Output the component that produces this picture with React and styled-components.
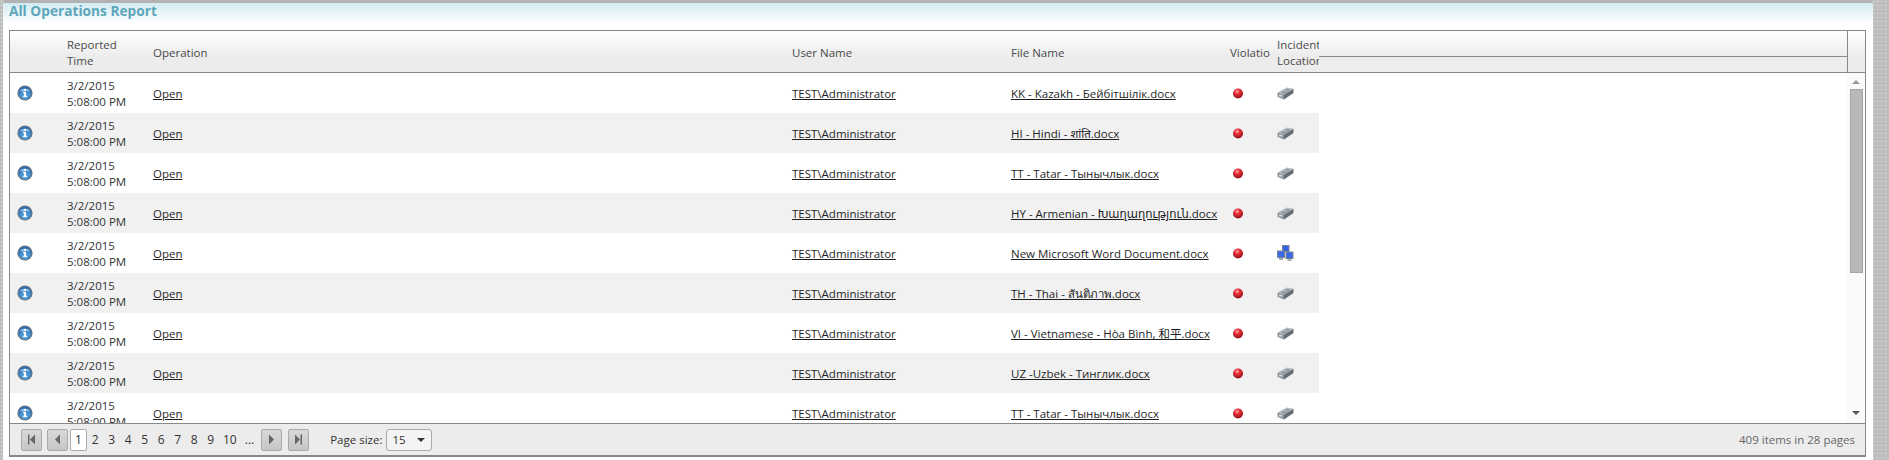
import React from 'react';
import styled, { createGlobalStyle } from 'styled-components';

const FONT = `"Open Sans", "Noto Sans", "DejaVu Sans", "Noto Sans CJK SC", sans-serif`;

const rows = [
  { file: 'KK - Kazakh - Бейбітшілік.docx' },
  { file: 'HI - Hindi - शांति.docx' },
  { file: 'TT - Tatar - Тынычлык.docx' },
  { file: 'HY - Armenian - Խաղաղություն.docx' },
  { file: 'New Microsoft Word Document.docx', network: true },
  { file: 'TH - Thai - สันติภาพ.docx' },
  { file: 'VI - Vietnamese - Hòa Bình, 和平.docx' },
  { file: 'UZ -Uzbek - Тинглик.docx' },
  { file: 'TT - Tatar - Тынычлык.docx' },
];

const InfoIcon = () => (
  <svg width="16" height="16" viewBox="0 0 16 16">
    <defs>
      <radialGradient id="infoFill" cx="50%" cy="75%" r="65%">
        <stop offset="0" stopColor="#62b0ea" />
        <stop offset="1" stopColor="#2a70b4" />
      </radialGradient>
    </defs>
    <circle cx="8" cy="8" r="7.6" fill="#6a737c" />
    <circle cx="8" cy="8" r="6.5" fill="url(#infoFill)" />
    <path d="M3 6.5C4 3.2 12 3.2 13 6.5C11 5.4 5 5.4 3 6.5Z" fill="#a9cbe6" />
    <rect x="6.9" y="3.8" width="2.2" height="1.9" fill="#fff" />
    <path d="M6 6.8h3.1v4.1H10V12H6v-1.1h.9V7.9H6Z" fill="#fff" />
  </svg>
);

const ViolationIcon = () => (
  <svg width="11" height="11" viewBox="0 0 11 11">
    <defs>
      <radialGradient id="redBall" cx="42%" cy="30%" r="72%">
        <stop offset="0" stopColor="#ffa8a8" />
        <stop offset="0.35" stopColor="#e8303a" />
        <stop offset="1" stopColor="#8e0f16" />
      </radialGradient>
    </defs>
    <circle cx="5" cy="5.5" r="5" fill="url(#redBall)" />
  </svg>
);

const DriveIcon = () => (
  <svg width="17" height="13" viewBox="0 0 17 13">
    <path d="M0.5 5.5L10 0.5L16.5 1.8L7 7.6Z" fill="#b3bcc1" />
    <path d="M7 7.6L16.5 1.8V6L7 12.5Z" fill="#666e73" />
    <path d="M0.5 5.5L7 7.6V12.5L0.5 10Z" fill="#8f979c" />
    <path d="M4 5.4L9.8 2.2L13 2.9L7.2 6.4Z" fill="#7c858b" />
    <path d="M6 4.9L9.8 2.9L11 3.2L7.3 5.3Z" fill="#cfd6da" />
    <rect x="2" y="8" width="3" height="1.4" fill="#dde1e3" />
  </svg>
);

const NetworkIcon = () => (
  <svg width="17" height="17" viewBox="0 0 17 17">
    <rect x="5.5" y="0.5" width="6.5" height="6" fill="#3560e4" stroke="#7d858b" />
    <rect x="0.5" y="6" width="7" height="6.5" fill="#3a68ec" stroke="#7d858b" />
    <rect x="9" y="7" width="7" height="6.5" fill="#3a68ec" stroke="#7d858b" />
    <rect x="2" y="13" width="4" height="2" fill="#a4aab0" />
    <rect x="10.5" y="14" width="4" height="2" fill="#a4aab0" />
  </svg>
);

const GlobalStyle = createGlobalStyle`
  html, body {
    margin: 0;
    height: 460px;
    overflow: hidden;
  }
`;

const Page = styled.div`
  height: 460px;
  box-sizing: border-box;
  padding-right: 16px;
  padding-left: 3px;
  background-color: #bebebe;
  background-image: radial-gradient(circle at 1.5px 1.5px, #e6e6e6 0.6px, transparent 0.8px);
  background-size: 4px 4px;
  font-family: ${FONT};
  font-size: 11.5px;
  color: #333;
`;

const Panel = styled.div`
  height: 100%;
  box-sizing: border-box;
  display: flex;
  flex-direction: column;
  background: #fff;
  border-top: 3px solid #b2b2b2;
  border-top-left-radius: 3px;
  border-top-right-radius: 3px;
  padding: 0 7px 3px 6px;
`;

const TitleBar = styled.div`
  height: 20px;
  flex: none;
  margin: 0 -7px 7px -6px;
  padding-left: 6px;
  background: linear-gradient(#d2ebf3, #ffffff);
`;

const Title = styled.h1`
  margin: 0;
  font-family: ${FONT};
  font-size: 13.7px;
  line-height: 15px;
  font-weight: 700;
  color: #5ea6ba;
`;

const Grid = styled.div`
  flex: 1;
  min-height: 0;
  display: flex;
  flex-direction: column;
  border: 1px solid #888;
  border-bottom-width: 2px;
`;

const Head = styled.div`
  flex: none;
  height: 41px;
  display: flex;
  border-bottom: 1px solid #888;
  background: linear-gradient(#ffffff, #ececec 62%);
`;

const columns = '48px 86px 639px 219px 219px 49px 49px';

const HeadCells = styled.div`
  flex: none;
  display: grid;
  grid-template-columns: ${columns};
  width: 1309px;
`;

const HeadCell = styled.div`
  display: flex;
  align-items: center;
  padding-top: 2px;
  padding-left: ${p => (p.$tight ? '7px' : '9px')};
  line-height: 16px;
  overflow: hidden;
  color: #4a4a4a;
  white-space: ${p => (p.$nowrap ? 'nowrap' : 'normal')};
`;

const HeadFiller = styled.div`
  flex: 1;
  display: flex;
  flex-direction: column;
`;

const FillerTop = styled.div`
  height: 25px;
  border-bottom: 1px solid #888;
`;

const FillerBottom = styled.div`
  flex: 1;
  background: #ededed;
`;

const HeadCorner = styled.div`
  flex: none;
  width: 17px;
  border-left: 1px solid #888;
`;

const Body = styled.div`
  flex: 1;
  min-height: 0;
  display: flex;
`;

const RowList = styled.div`
  flex: 1;
  min-width: 0;
  overflow: hidden;
`;

const Row = styled.div`
  display: grid;
  grid-template-columns: ${columns};
  width: 1309px;
  height: 40px;
  align-items: center;
  background: ${p => (p.$alt ? '#f1f1f1' : '#fff')};
`;

const IconCell = styled.div`
  display: flex;
  align-items: center;
  padding-left: ${p => p.$pad}px;
`;

const Time = styled.div`
  padding: 2px 0 0 9px;
  line-height: 16px;
  white-space: nowrap;
`;

const LinkCell = styled.a`
  justify-self: start;
  margin: 2px 0 0 9px;
  line-height: 16px;
  color: #1f1f1f;
  text-decoration: underline;
  white-space: nowrap;
`;

const Scrollbar = styled.div`
  flex: none;
  width: 18px;
  display: flex;
  flex-direction: column;
  align-items: center;
  background: #fafafa;
`;

const Arrow = styled.div`
  width: 0;
  height: 0;
  flex: none;
  margin: ${p => p.$margin};
  border-left: 4px solid transparent;
  border-right: 4px solid transparent;
  ${p => (p.$down ? 'border-top: 4px solid #555;' : 'border-bottom: 4px solid #999;')}
`;

const Thumb = styled.div`
  flex: none;
  width: 11px;
  height: 182px;
  background: #b9b9b9;
  border: 1px solid #a6a6a6;
`;

const ScrollSpace = styled.div`
  flex: 1;
`;

const Pager = styled.div`
  flex: none;
  height: 32px;
  box-sizing: border-box;
  display: flex;
  align-items: center;
  padding: 0 10px 0 11px;
  border-top: 1px solid #888;
  background: #ececec;
`;

const PageButton = styled.div`
  width: 21px;
  height: 22px;
  box-sizing: border-box;
  display: flex;
  align-items: center;
  justify-content: center;
  margin-right: ${p => p.$gap || 0}px;
  border: 1px solid #aaa;
  border-radius: 2px;
  background: linear-gradient(#d8d8d8, #c6c6c6);
`;

const Numbers = styled.div`
  display: flex;
  align-items: center;
  margin-right: 3px;
`;

const PageNumber = styled.div`
  min-width: 16.5px;
  box-sizing: border-box;
  padding: 0 4px;
  text-align: center;
  font-size: 12px;
`;

const CurrentPage = styled.div`
  width: 17px;
  height: 22px;
  box-sizing: border-box;
  line-height: 20px;
  text-align: center;
  font-size: 12px;
  background: #fff;
  border: 1px solid #aaa;
  border-radius: 2px;
`;

const PageSize = styled.div`
  display: flex;
  align-items: center;
  margin-left: 21px;
  gap: 4px;
`;

const Select = styled.div`
  width: 46px;
  height: 22px;
  box-sizing: border-box;
  display: flex;
  align-items: center;
  justify-content: space-between;
  padding: 0 6px 0 5px;
  border: 1px solid #aaa;
  border-radius: 3px;
  background: #f4f4f4;
`;

const SelectCaret = styled.div`
  width: 0;
  height: 0;
  border-left: 4px solid transparent;
  border-right: 4px solid transparent;
  border-top: 4px solid #333;
`;

const PagerInfo = styled.div`
  margin-left: auto;
  color: #666;
`;

const Skip = ({ dir }) => (
  <svg width="9" height="11" viewBox="0 0 9 11">
    {dir === 'first' ? (
      <path d="M1 0.5h1.5v10H1ZM8 0.5v10L3 5.5Z" fill="#666" />
    ) : (
      <path d="M8 0.5H6.5v10H8ZM1 0.5v10L6 5.5Z" fill="#666" />
    )}
  </svg>
);

const Step = ({ dir }) => (
  <svg width="7" height="11" viewBox="0 0 7 11">
    <path d={dir === 'prev' ? 'M6 0.5v10L1 5.5Z' : 'M1 0.5v10L6 5.5Z'} fill="#666" />
  </svg>
);

export default function App() {
  return (
    <>
      <GlobalStyle />
      <Page>
        <Panel>
          <TitleBar>
            <Title>All Operations Report</Title>
          </TitleBar>
          <Grid>
            <Head>
              <HeadCells>
                <HeadCell />
                <HeadCell>Reported Time</HeadCell>
                <HeadCell>Operation</HeadCell>
                <HeadCell>User Name</HeadCell>
                <HeadCell>File Name</HeadCell>
                <HeadCell $nowrap>Violation</HeadCell>
                <HeadCell $tight>Incident Location</HeadCell>
              </HeadCells>
              <HeadFiller>
                <FillerTop />
                <FillerBottom />
              </HeadFiller>
              <HeadCorner />
            </Head>
            <Body>
              <RowList>
                {rows.map((row, i) => (
                  <Row key={i} $alt={i % 2 === 1}>
                    <IconCell $pad={7}><InfoIcon /></IconCell>
                    <Time>3/2/2015<br />5:08:00 PM</Time>
                    <LinkCell>Open</LinkCell>
                    <LinkCell>TEST\Administrator</LinkCell>
                    <LinkCell>{row.file}</LinkCell>
                    <IconCell $pad={12}><ViolationIcon /></IconCell>
                    <IconCell $pad={7}>{row.network ? <NetworkIcon /> : <DriveIcon />}</IconCell>
                  </Row>
                ))}
              </RowList>
              <Scrollbar>
                <Arrow $margin="7px 0 5px" />
                <Thumb />
                <ScrollSpace />
                <Arrow $down $margin="0 0 8px" />
              </Scrollbar>
            </Body>
            <Pager>
              <PageButton $gap={5}><Skip dir="first" /></PageButton>
              <PageButton $gap={2}><Step dir="prev" /></PageButton>
              <Numbers>
                <CurrentPage>1</CurrentPage>
                {['2', '3', '4', '5', '6', '7', '8', '9', '10', '...'].map(n => (
                  <PageNumber key={n}>{n}</PageNumber>
                ))}
              </Numbers>
              <PageButton $gap={6}><Step dir="next" /></PageButton>
              <PageButton><Skip dir="last" /></PageButton>
              <PageSize>
                Page size:
                <Select>15<SelectCaret /></Select>
              </PageSize>
              <PagerInfo>409 items in 28 pages</PagerInfo>
            </Pager>
          </Grid>
        </Panel>
      </Page>
    </>
  );
}
